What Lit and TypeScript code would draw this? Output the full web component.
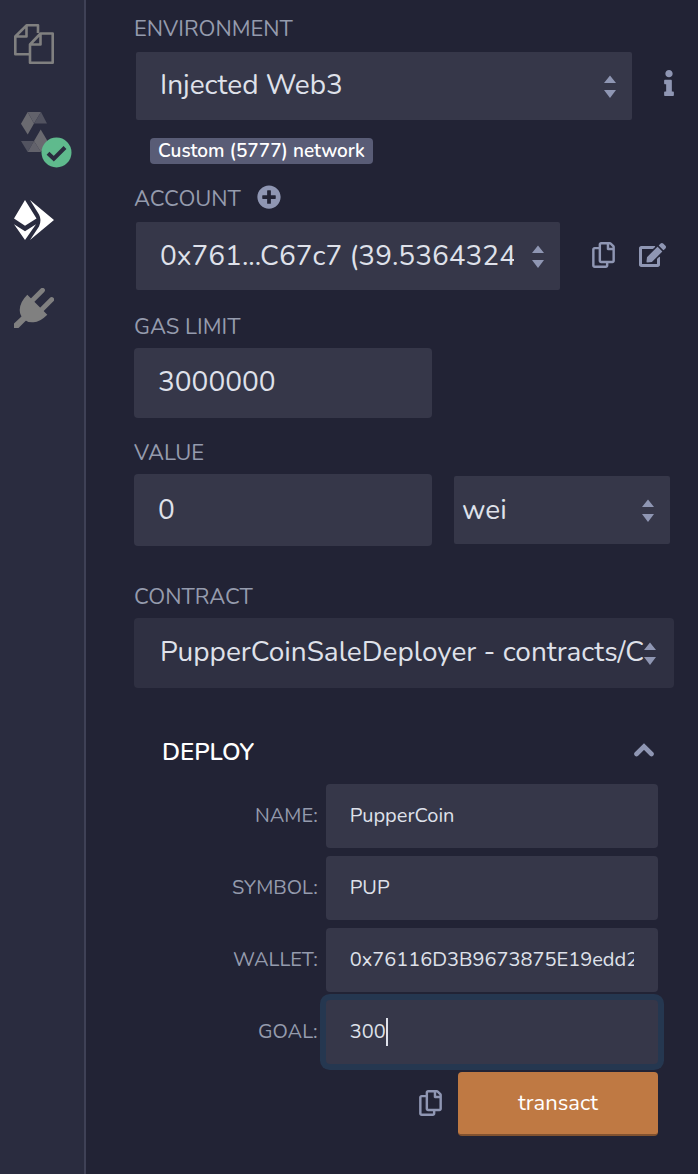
import { LitElement, html, css, svg } from "lit";
import { customElement } from "lit/decorators.js";

const copyPath =
  "M433.941 65.941l-51.882-51.882A48 48 0 0 0 348.118 0H176c-26.510 0-48 21.490-48 48v48H48c-26.510 0-48 21.490-48 48v320c0 26.510 21.490 48 48 48h224c26.510 0 48-21.490 48-48v-48h80c26.510 0 48-21.490 48-48V99.882a48 48 0 0 0-14.059-33.941zM266 464H54a6 6 0 0 1-6-6V150a6 6 0 0 1 6-6h74v224c0 26.510 21.490 48 48 48h96v42a6 6 0 0 1-6 6zm128-96H182a6 6 0 0 1-6-6V54a6 6 0 0 1 6-6h106v88c0 13.255 10.745 24 24 24h88v202a6 6 0 0 1-6 6zm6-256h-64V48h9.632c1.591 0 3.117.632 4.243 1.757l48.368 48.368a6 6 0 0 1 1.757 4.243V112z";
const editPath =
  "M402.600 83.200l90.200 90.200c3.800 3.800 3.800 10 0 13.800L274.400 405.600l-92.800 10.300c-12.400 1.400-22.900-9.100-21.500-21.500l10.300-92.800L388.800 83.200c3.800-3.800 10-3.800 13.800 0zm162-22.900l-48.800-48.800c-15.200-15.200-39.900-15.200-55.200 0l-35.400 35.400c-3.800 3.800-3.800 10 0 13.800l90.200 90.200c3.800 3.800 10 3.800 13.800 0l35.400-35.400c15.200-15.300 15.200-40 0-55.200zM384 346.200V448H64V128h229.800c3.200 0 6.200-1.300 8.500-3.500l40-40c7.600-7.600 2.200-20.500-8.500-20.500H48C21.500 64 0 85.500 0 112v352c0 26.500 21.500 48 48 48h352c26.500 0 48-21.500 48-48V306.200c0-10.700-12.900-16-20.500-8.500l-40 40c-2.200 2.300-3.500 5.300-3.500 8.500z";
const infoPath =
  "M20 424.229h20V279.771H20c-11.046 0-20-8.954-20-20V212c0-11.046 8.954-20 20-20h112c11.046 0 20 8.954 20 20v212.229h20c11.046 0 20 8.954 20 20V492c0 11.046-8.954 20-20 20H20c-11.046 0-20-8.954-20-20v-47.771c0-11.046 8.954-20 20-20zM96 0C56.235 0 24 32.235 24 72s32.235 72 72 72 72-32.235 72-72S135.764 0 96 0z";
const plusPath =
  "M256 8C119 8 8 119 8 256s111 248 248 248 248-111 248-248S393 8 256 8zm144 276c0 6.600-5.400 12-12 12h-92v92c0 6.600-5.400 12-12 12h-56c-6.600 0-12-5.400-12-12v-92h-92c-6.600 0-12-5.400-12-12v-56c0-6.600 5.400-12 12-12h92v-92c0-6.600 5.400-12 12-12h56c6.600 0 12 5.400 12 12v92h92c6.600 0 12 5.400 12 12v56z";

const icon = (path: string, w: number, h: number, box: string) =>
  html`<svg width=${w} height=${h} viewBox=${box} aria-hidden="true">${svg`<path fill="currentColor" d=${path} />`}</svg>`;

const copyIcon = () => icon(copyPath, 23, 26, "0 0 448 512");

const arrows = html`<svg class="arrows" width="12" height="24" viewBox="0 0 12 24" aria-hidden="true">
  <path fill="currentColor" d="M0 8 6 .5 12 8zM0 15h12l-6 8z" />
</svg>`;

@customElement("side-nav")
class SideNav extends LitElement {
  static styles = css`
    :host {
      display: block;
      background: #2a2c3f;
      border-right: 2px solid #3f4156;
    }
    nav {
      display: flex;
      flex-direction: column;
      gap: 48px;
      padding: 24px 14px;
    }
    button {
      display: block;
      position: relative;
      width: 40px;
      height: 40px;
      padding: 0;
      border: 0;
      background: none;
      color: #808080;
    }
    button.active {
      color: #fff;
    }
    svg {
      display: block;
    }
    .status {
      position: absolute;
      left: 27px;
      top: 25px;
    }
  `;

  render() {
    return html`<nav aria-label="Plugins">
      <button aria-label="File explorers">
        <svg width="40" height="40" viewBox="0 0 40 40" fill="none" stroke="currentColor" stroke-width="2.600" stroke-linejoin="round">
          <path d="M15 30.200H1.300V12.500L12.500 1.300H24V9M12.500 1.300V12.500H1.300" />
          <path d="M26.500 9.500H38.700V38.700H16V20.500zM26.500 9.500V20.500H16" />
        </svg>
      </button>
      <button aria-label="Solidity compiler">
        <svg width="40" height="40" viewBox="0 0 40 40">
          <path fill="#6a6a70" d="M7 11.700 13.700 0 20 11.500 13.700 22.500z" />
          <path fill="#62626b" d="M13.700 0H27L20 11.500z" />
          <path fill="#525360" d="M27 0 33 11.500H20z" />
          <path fill="#525360" d="M7 29H20L13.700 40z" />
          <path fill="#62626b" d="M20 29 27 40H13.700z" />
          <path fill="#6a6a70" d="M26.700 17.500 33.500 29 27 40 20 29z" />
        </svg>
        <svg class="status" width="31" height="31" viewBox="0 0 31 31">
          <circle cx="15.500" cy="15.500" r="15" fill="#5fba8d" />
          <path d="M7 16.200 12.800 21.700 24 10.500" fill="none" stroke="#2a2c3f" stroke-width="4" />
        </svg>
      </button>
      <button class="active" aria-label="Deploy and run transactions">
        <svg width="40" height="40" viewBox="0 0 40 40" fill="currentColor">
          <path d="M11 0 22.500 18.500 11 25.700 0 18.500zM0 24.300 11 31.200 22 24.300 11 40zM16 0 40 20 16 40 25 26.500Q28 20 25 14.500z" />
        </svg>
      </button>
      <button aria-label="Plugin manager">
        <svg width="40" height="40" viewBox="0 0 40 40" fill="currentColor">
          <path d="M13.300 6.700 33.300 26.700Q26 34 19.500 34.300 14 34.800 10 31.500 5.800 27.500 5.700 22 5.800 14 13.300 6.700z" />
          <path d="M28.500 2.300 17.500 13.300M37.700 11.500 26.500 22.700" fill="none" stroke="currentColor" stroke-width="4.800" stroke-linecap="round" />
          <path d="M0 40V35.500L8 28 12.500 32 4.500 40z" />
        </svg>
      </button>
    </nav>`;
  }
}

@customElement("run-panel")
class RunPanel extends LitElement {
  static styles = css`
    :host {
      display: block;
      min-width: 0;
      color: #dfe1ea;
    }
    * {
      box-sizing: border-box;
    }
    form {
      padding: 12px 24px 36px 48px;
    }
    svg {
      display: block;
    }
    .label {
      display: block;
      padding-top: 2px;
      font-size: 22px;
      line-height: 30px;
      color: #959bad;
      text-transform: uppercase;
    }
    .head {
      display: flex;
      align-items: center;
      gap: 16px;
    }
    .row {
      display: flex;
      align-items: center;
      padding-left: 2px;
      margin-top: 8px;
    }
    .icon {
      flex: none;
      padding: 0 0 2px;
      border: 0;
      background: none;
      color: #8f96b3;
    }
    .picker {
      display: grid;
      flex: 1;
      min-width: 0;
      align-items: center;
    }
    .picker > * {
      grid-area: 1 / 1;
    }
    .arrows {
      justify-self: end;
      margin: 2px 16px 0 0;
      color: #8f96b3;
      pointer-events: none;
    }
    select,
    input {
      width: 100%;
      min-width: 0;
      margin: 0;
      border: 0;
      border-radius: 4px;
      outline: 0;
      background: #363749;
      color: inherit;
      font-family: inherit;
      font-size: 28px;
    }
    select {
      appearance: none;
      height: 68px;
      padding: 0 46px 2px 24px;
      border-radius: 2px;
      text-overflow: clip;
    }
    input {
      height: 70px;
      padding: 0 24px 2px;
    }
    .env {
      gap: 32px;
    }
    .env .icon {
      padding-bottom: 6px;
    }
    .account {
      gap: 24px;
      padding-right: 8px;
    }
    .account .picker {
      margin-right: 8px;
    }
    .account select {
      padding-bottom: 0;
    }
    .badge {
      width: fit-content;
      margin: 18px 16px;
      padding: 1px 8px 0;
      border-radius: 4px;
      background: #595c76;
      color: #fff;
      font-size: 19px;
      font-weight: 600;
      line-height: 25px;
    }
    .group {
      margin-top: 20px;
    }
    .pair {
      display: grid;
      grid-template-columns: 298fr 216fr;
      align-items: center;
      gap: 22px;
      margin-top: 6px;
      padding-right: 4px;
    }
    .value {
      height: 72px;
      padding-bottom: 0;
    }
    .unit {
      padding: 0 46px 0 8px;
    }
    .contract {
      margin-top: 18px;
    }
    .group.last {
      margin-top: 34px;
    }
    .contract-picker {
      margin-top: 6px;
    }
    .contract-picker select {
      height: 70px;
      padding-left: 26px;
      padding-right: 30px;
      border-radius: 4px;
      background: #2f3042;
    }
    .contract-picker .arrows {
      margin-right: 18px;
    }
    .deploy {
      padding: 46px 16px 0 28px;
    }
    .title {
      display: flex;
      align-items: center;
      justify-content: space-between;
      padding-right: 4px;
      margin-bottom: 16px;
    }
    h2 {
      margin: 0;
      padding-top: 2px;
      color: #fff;
      font-size: 24px;
      font-weight: 600;
      line-height: 32px;
    }
    .params {
      display: grid;
      grid-template-columns: 1fr 67%;
      align-items: center;
      gap: 8px;
    }
    .params .label {
      padding-top: 0;
      font-size: 20px;
      text-align: right;
    }
    .params input {
      height: 64px;
      font-size: 20px;
    }
    .focus {
      position: relative;
    }
    .focus input {
      display: block;
      box-shadow: 0 0 0 6px #253750;
    }
    .caret {
      position: absolute;
      left: 60px;
      top: 18px;
      width: 2px;
      height: 28px;
      background: #dfe1ea;
    }
    .actions {
      display: flex;
      align-items: center;
      justify-content: flex-end;
      gap: 16px;
      margin-top: 8px;
    }
    .transact {
      width: 200px;
      height: 64px;
      padding: 0;
      border: 0;
      border-bottom: 2px solid #82522f;
      border-radius: 4px;
      background: #bf7943;
      color: #fff;
      font-family: inherit;
      font-size: 22px;
    }
  `;

  private param(id: string, label: string, value: string) {
    return html`<label class="label" for=${id}>${label}:</label>
      <input id=${id} .value=${value} />`;
  }

  render() {
    return html`<form>
      <label class="label" for="env">Environment</label>
      <div class="row env">
        <div class="picker">
          <select id="env"><option>Injected Web3</option></select>
          ${arrows}
        </div>
        <button type="button" class="icon" aria-label="Environment info">${icon(infoPath, 10, 26, "0 0 192 512")}</button>
      </div>
      <div class="badge">Custom (5777) network</div>

      <div class="head">
        <label class="label" for="account">Account</label>
        <button type="button" class="icon" aria-label="Create account">${icon(plusPath, 24, 24, "0 0 512 512")}</button>
      </div>
      <div class="row account">
        <div class="picker">
          <select id="account"><option>0x761...C67c7 (39.53643249 ether)</option></select>
          ${arrows}
        </div>
        <button type="button" class="icon" aria-label="Copy account">${copyIcon()}</button>
        <button type="button" class="icon" aria-label="Sign message">${icon(editPath, 27, 24, "0 0 576 512")}</button>
      </div>

      <div class="group">
        <label class="label" for="gas">Gas limit</label>
        <div class="pair"><input id="gas" .value=${"3000000"} /></div>
      </div>

      <div class="contract">
        <label class="label" for="value">Value</label>
        <div class="pair">
          <input id="value" class="value" .value=${"0"} />
          <div class="picker">
            <select class="unit" aria-label="Unit"><option>wei</option></select>
            ${arrows}
          </div>
        </div>
      </div>

      <div class="group last">
        <label class="label" for="contract">Contract</label>
        <div class="picker contract-picker">
          <select id="contract"><option>PupperCoinSaleDeployer - contracts/Crowdsale.sol</option></select>
          ${arrows}
        </div>
      </div>

      <section class="deploy">
        <div class="title">
          <h2>DEPLOY</h2>
          <button type="button" class="icon" aria-label="Collapse">
            <svg width="20" height="14" viewBox="0 0 20 14">
              <path d="M2.500 11 10 3.500 17.500 11" fill="none" stroke="currentColor" stroke-width="4.600" stroke-linecap="round" />
            </svg>
          </button>
        </div>
        <div class="params">
          ${this.param("name", "name", "PupperCoin")} ${this.param("symbol", "symbol", "PUP")}
          ${this.param("wallet", "wallet", "0x76116D3B9673875E19edd2")}
          <label class="label" for="goal">goal:</label>
          <div class="focus">
            <input id="goal" .value=${"300"} />
            <span class="caret"></span>
          </div>
        </div>
        <div class="actions">
          <button type="button" class="icon" aria-label="Copy parameters">${copyIcon()}</button>
          <button type="button" class="transact">transact</button>
        </div>
      </section>
    </form>`;
  }
}

@customElement("app-root")
class AppRoot extends LitElement {
  static styles = css`
    :host {
      display: grid;
      grid-template-columns: auto minmax(0, 1fr);
      min-height: 100vh;
      background: #222335;
      font-family: Nunito, Lato, sans-serif;
    }
    side-nav {
      width: 84px;
    }
  `;

  render() {
    return html`<side-nav></side-nav><run-panel></run-panel>`;
  }
}
